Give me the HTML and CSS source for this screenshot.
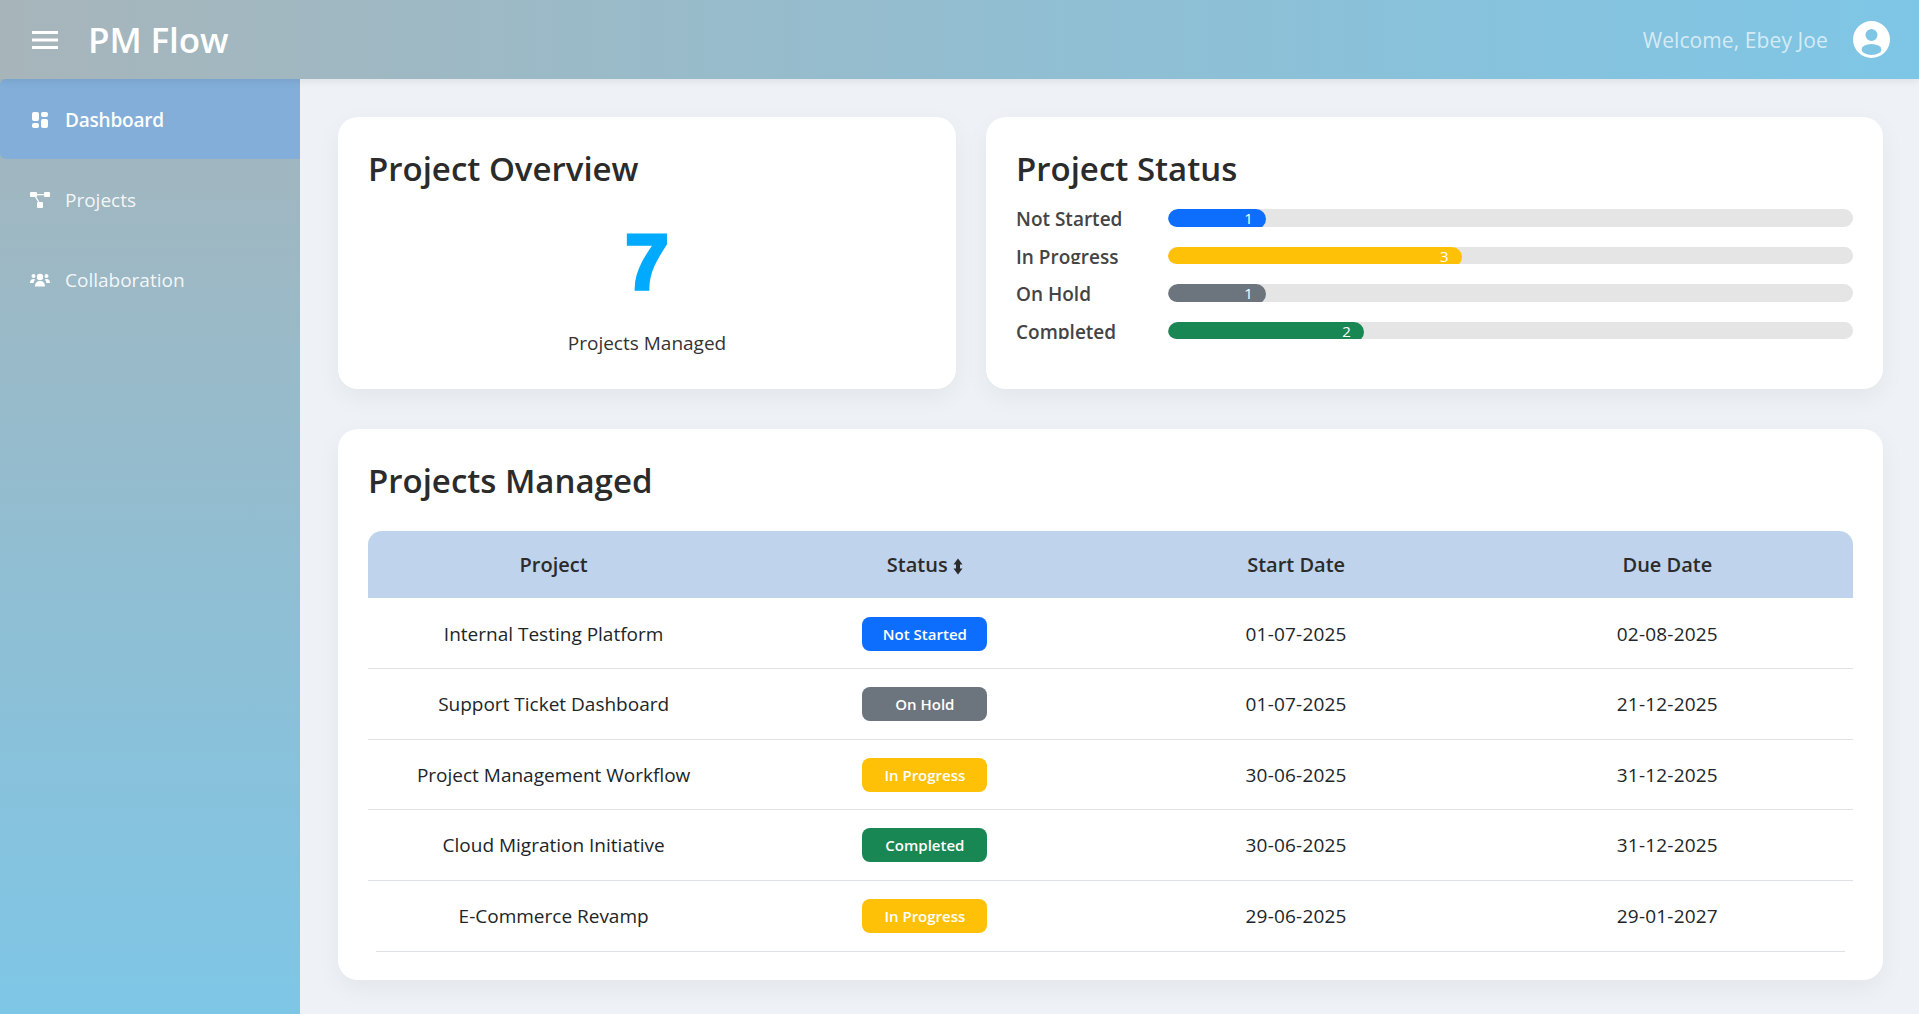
FILE: index.html
```html
<!DOCTYPE html>
<html lang="en">
<head>
  <meta charset="UTF-8" />
  <meta name="viewport" content="width=device-width, initial-scale=1" />
  <title>PM Flow</title>
  <link rel="stylesheet" href="styles.css">
</head>
<body>
  <header class="topbar">
    <div class="brand">
      <svg class="menu-icon" width="26" height="18" viewBox="0 0 26 18"><path d="M0 0h26v3H0zM0 7.500h26v3H0zM0 15h26v3H0z" fill="#fff"/></svg>
      <span class="brand-name">PM Flow</span>
    </div>
    <div class="user">
      <span class="welcome">Welcome, Ebey Joe</span>
      <svg class="avatar" width="37" height="37" viewBox="0 0 16 16"><path fill="#fff" fill-rule="evenodd" d="M8 0a8 8 0 1 1 0 16A8 8 0 0 1 8 0zm0 3.450a2.600 2.600 0 1 0 0 5.200 2.600 2.600 0 0 0 0-5.200zM3.700 12.300a4.300 2.400 0 1 0 8.600 0 4.300 2.400 0 1 0-8.600 0z"/></svg>
    </div>
  </header>

  <div class="layout">
    <nav class="sidebar">
      <a class="nav-item active" href="#">
        <svg width="16" height="16" viewBox="0 0 16 16" fill="#fff"><rect x="0" y="0" width="7" height="9" rx="2"/><rect x="9" y="0" width="7" height="5" rx="2"/><rect x="0" y="11" width="7" height="5" rx="2"/><rect x="9" y="7" width="7" height="9" rx="2"/></svg>
        Dashboard
      </a>
      <a class="nav-item" href="#">
        <svg width="20" height="16" viewBox="0 0 20 16" fill="#fff"><rect x="0" y="0" width="7" height="5" rx="1"/><rect x="14" y="0" width="6" height="5" rx="1"/><rect x="7" y="10" width="6" height="6" rx="1"/><path d="M7 2h7v1.200H7zM5 5h1.400l3 5H8z"/></svg>
        Projects
      </a>
      <a class="nav-item" href="#">
        <svg width="20" height="16" viewBox="0 0 20 16" fill="#fff"><circle cx="10" cy="5" r="3.200"/><circle cx="3.500" cy="4" r="2"/><circle cx="16.500" cy="4" r="2"/><path d="M5 14.500c0-3.500 2-5.500 5-5.500s5 2 5 5.500zM0 11c0-2.500 1.300-4 3.500-4 .8 0 1.300.2 1.800.5C4.200 8.500 3.700 9.700 3.600 11zM20 11c0-2.500-1.300-4-3.500-4-.8 0-1.300.2-1.800.5 1.100 1 1.600 2.200 1.700 3.500z"/></svg>
        Collaboration
      </a>
    </nav>

    <main class="content">
      <div class="top-row">
        <section class="card overview">
          <h2>Project Overview</h2>
          <div class="big-number">7</div>
          <p class="big-label">Projects Managed</p>
        </section>

        <section class="card status">
          <h2>Project Status</h2>
          <div class="bars">
            <div class="bar-row">
              <span class="bar-label">Not Started</span>
              <div class="track"><div class="fill blue" style="width:14.2857%">1</div></div>
            </div>
            <div class="bar-row">
              <span class="bar-label">In Progress</span>
              <div class="track"><div class="fill yellow" style="width:42.8571%">3</div></div>
            </div>
            <div class="bar-row">
              <span class="bar-label">On Hold</span>
              <div class="track"><div class="fill grey" style="width:14.2857%">1</div></div>
            </div>
            <div class="bar-row">
              <span class="bar-label">Completed</span>
              <div class="track"><div class="fill green" style="width:28.5714%">2</div></div>
            </div>
          </div>
        </section>
      </div>

      <section class="card projects">
        <h2>Projects Managed</h2>
        <table class="project-table">
          <thead>
            <tr>
              <th>Project</th>
              <th>Status <svg class="sort-icon" width="10" height="17" viewBox="0 0 10 16" fill="currentColor"><path d="M5 0l4.500 6H7v4h2.500L5 16 .5 10H3V6H.5z"/></svg></th>
              <th>Start Date</th>
              <th>Due Date</th>
            </tr>
          </thead>
          <tbody>
            <tr>
              <td>Internal Testing Platform</td>
              <td><span class="badge blue">Not Started</span></td>
              <td>01-07-2025</td>
              <td>02-08-2025</td>
            </tr>
            <tr>
              <td>Support Ticket Dashboard</td>
              <td><span class="badge grey">On Hold</span></td>
              <td>01-07-2025</td>
              <td>21-12-2025</td>
            </tr>
            <tr>
              <td>Project Management Workflow</td>
              <td><span class="badge yellow">In Progress</span></td>
              <td>30-06-2025</td>
              <td>31-12-2025</td>
            </tr>
            <tr>
              <td>Cloud Migration Initiative</td>
              <td><span class="badge green">Completed</span></td>
              <td>30-06-2025</td>
              <td>31-12-2025</td>
            </tr>
            <tr>
              <td>E-Commerce Revamp</td>
              <td><span class="badge yellow">In Progress</span></td>
              <td>29-06-2025</td>
              <td>29-01-2027</td>
            </tr>
          </tbody>
        </table>
        <div class="table-end"></div>
      </section>
    </main>
  </div>
</body>
</html>
```

FILE: styles.css
```css
* {
  box-sizing: border-box;
}

html,
body {
  height: 100%;
}

body {
  font-family: 'Open Sans', 'Noto Sans', sans-serif;
  background: #eef2f7;
  color: #212529;
  margin: 0;
  overflow: hidden;
}

.topbar {
  position: relative;
  z-index: 2;
  height: 79px;
  padding: 0 29px 0 32px;
  display: flex;
  align-items: center;
  justify-content: space-between;
  background: linear-gradient(90deg, #a7b5ba, #7ec6e6);
  box-shadow: 0 2px 8px rgba(0,0,0,0.08);
}

.brand {
  display: flex;
  align-items: center;
  gap: 30px;
}

.menu-icon {
  display: block;
}

.brand-name {
  color: white;
  font-size: 35px;
  font-weight: 600;
  line-height: 1;
  letter-spacing: -0.1px;
}

.user {
  display: flex;
  align-items: center;
  gap: 25px;
}

.welcome {
  color: rgba(255,255,255,0.68);
  font-size: 21px;
  letter-spacing: 0.1px;
}

.avatar {
  display: block;
}

.layout {
  display: flex;
  height: 935px;
}

.sidebar {
  width: 300px;
  flex-shrink: 0;
  background: linear-gradient(180deg, #a4b5bc, #7ec6e6);
}

.nav-item {
  height: 80px;
  padding: 2px 0 0 30px;
  display: flex;
  align-items: center;
  gap: 15px;
  color: rgba(255,255,255,0.9);
  font-size: 19px;
  text-decoration: none;
}

.nav-item svg {
  flex: 0 0 20px;
}

.nav-item.active {
  background: #82aed9;
  color: white;
  font-weight: 600;
  letter-spacing: -0.2px;
  border-radius: 6px 0 0 6px;
}

.content {
  flex: 1;
  padding: 38px 36px 0 38px;
}

.top-row {
  display: grid;
  grid-template-columns: 618px 1fr;
  gap: 30px;
  margin-bottom: 40px;
}

.card {
  background: white;
  border-radius: 20px;
  padding: 30px;
  box-shadow: 0 8px 24px rgba(0,0,0,0.05);
}

h2 {
  margin: 0;
  color: #2b2b2b;
  font-size: 33px;
  font-weight: 600;
  line-height: 44px;
}

.overview,
.status {
  height: 272px;
}

.big-number {
  font-family: 'Liberation Sans', sans-serif;
  color: #00aaff;
  font-size: 78px;
  font-weight: 700;
  line-height: 90px;
  text-align: center;
  margin-top: 26px;
  -webkit-text-stroke: 3.500px #00aaff;
}

.big-label {
  margin: 24px 0 0;
  color: #333;
  font-size: 19px;
  line-height: 24px;
  text-align: center;
}

.bars {
  margin-top: 18px;
  display: flex;
  flex-direction: column;
  gap: 20px;
}

.bar-row {
  height: 17.500px;
  display: flex;
  overflow: hidden;
}

.bar-label {
  width: 152px;
  flex-shrink: 0;
  color: #444;
  font-size: 19px;
  font-weight: 600;
  line-height: 20px;
}

.track {
  flex: 1;
  height: 17.500px;
  background: #e5e5e5;
  border-radius: 9px;
  overflow: hidden;
}

.fill {
  height: 20px;
  padding-right: 13px;
  border-radius: 10px;
  color: white;
  font-size: 15px;
  line-height: 18px;
  text-align: right;
}

.blue {
  background: #0d6efd;
}

.yellow {
  background: #ffc107;
}

.grey {
  background: #6c757d;
}

.green {
  background: #198754;
}

.projects {
  height: 551px;
}

.project-table {
  width: 100%;
  margin-top: 28px;
  border-collapse: collapse;
  table-layout: fixed;
}

.project-table th {
  height: 67px;
  background: #c0d3ec;
  color: #2b2b2b;
  font-size: 20px;
  font-weight: 600;
  text-align: center;
}

.project-table th:first-child {
  border-top-left-radius: 14px;
}

.project-table th:last-child {
  border-top-right-radius: 14px;
}

.sort-icon {
  vertical-align: -3px;
}

.project-table td {
  height: 70.500px;
  padding: 1px 0 0;
  border-bottom: 1px solid #dee2e6;
  color: #212529;
  font-size: 19px;
  text-align: center;
  vertical-align: middle;
}

.project-table td:nth-child(n+3) {
  letter-spacing: 0.2px;
}

.project-table tr:last-child td {
  border-bottom: none;
}

.table-end {
  height: 1px;
  margin: 0 8px;
  background: #dee2e6;
}

.badge {
  display: inline-block;
  width: 125px;
  height: 34px;
  border-radius: 8px;
  color: white;
  font-size: 15px;
  font-weight: 600;
  line-height: 34px;
  vertical-align: middle;
}
```
